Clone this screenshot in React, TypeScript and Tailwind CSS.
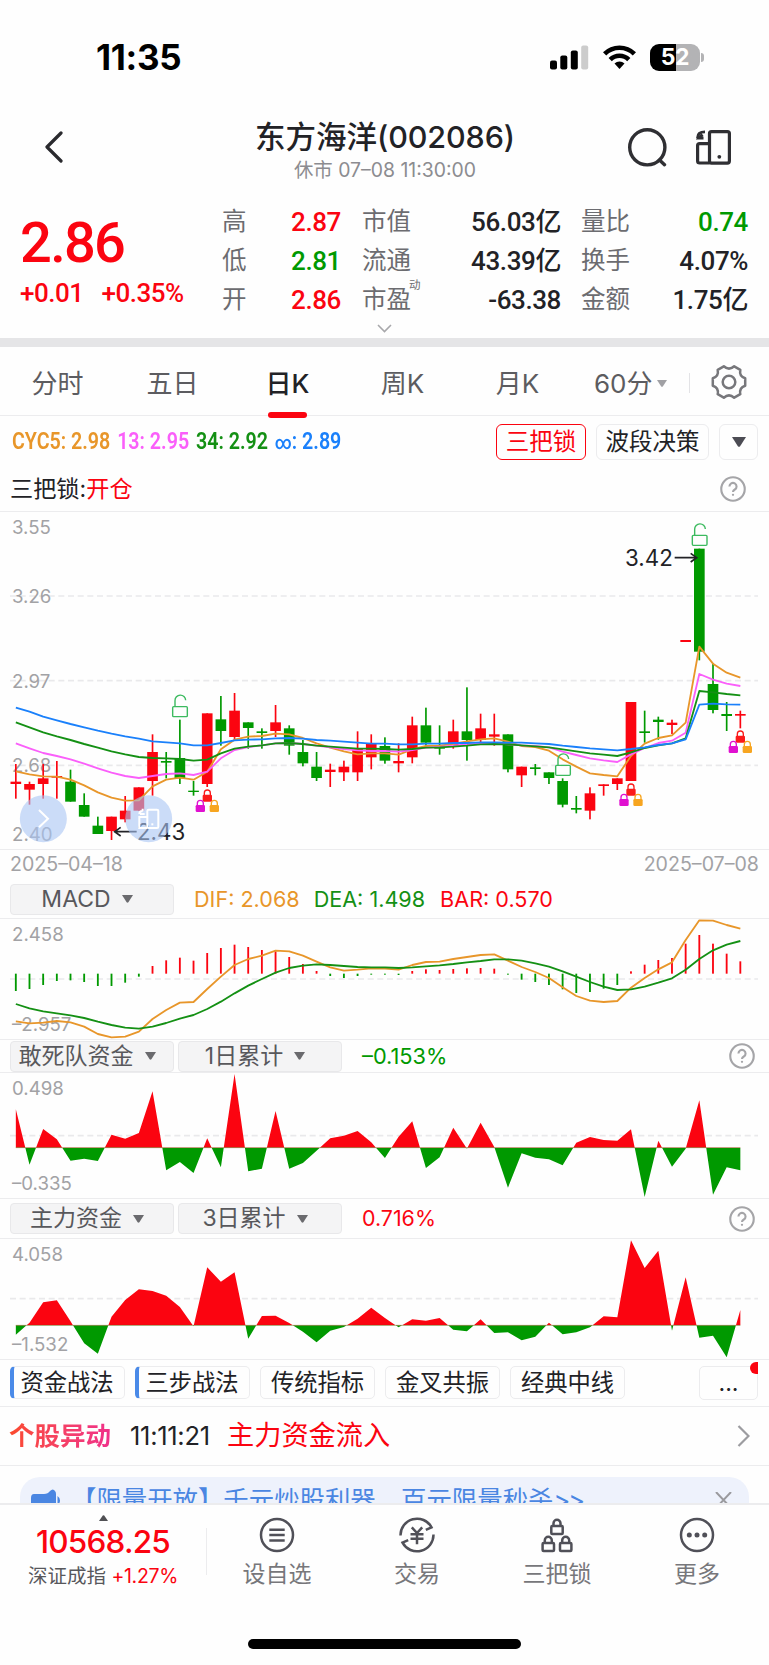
import type { ReactNode } from 'react';
import clsx from 'clsx';

const RED = '#fb0410';
const GREEN = '#009900';
const GOLD = '#e8962a';
const PINK = '#fa5ffa';
const DEEP_GREEN = '#149014';
const BLUE = '#1a80fb';

// Charts are drawn at 3 units per pixel.
const WIDTH = 2307;
const xAt = (i: number) => 47.5 + i * 41.01;

type Candle = ['r' | 'g', number, number, number, number];

// colour, wick top, body top, body bottom, wick bottom
const candles: Candle[] = [
  ['r', 762, 815, 822, 866], ['r', 815, 822, 839, 884], ['r', 762, 805, 822, 866], ['r', 753, 798, 803, 866],
  ['g', 779, 815, 875, 875], ['g', 850, 885, 920, 920], ['g', 920, 947, 972, 972], ['r', 920, 920, 963, 990],
  ['r', 858, 902, 928, 937], ['r', 832, 832, 902, 902], ['r', 673, 726, 813, 857], ['g', 726, 753, 758, 805],
  ['g', 629, 744, 805, 822], ['g', 813, 842, 846, 857], ['r', 610, 610, 822, 831], ['g', 558, 628, 663, 707],
  ['r', 549, 602, 681, 690], ['g', 637, 637, 654, 716], ['g', 655, 664, 669, 716], ['r', 585, 637, 663, 681],
  ['g', 646, 655, 707, 734], ['g', 690, 726, 760, 769], ['g', 726, 770, 804, 813], ['r', 761, 779, 786, 831],
  ['r', 752, 770, 787, 813], ['r', 664, 717, 787, 813], ['r', 673, 700, 742, 778], ['g', 682, 708, 752, 761],
  ['r', 700, 753, 760, 787], ['r', 620, 646, 742, 760], ['g', 593, 646, 698, 708], ['g', 646, 709, 716, 734],
  ['r', 629, 664, 707, 716], ['g', 532, 664, 690, 752], ['r', 611, 655, 690, 698], ['r', 611, 673, 680, 707],
  ['g', 673, 673, 778, 787], ['r', 770, 770, 796, 831], ['g', 762, 772, 777, 796], ['g', 787, 787, 804, 822],
  ['g', 805, 813, 884, 892], ['g', 858, 894, 899, 910], ['r', 832, 850, 902, 928], ['r', 823, 823, 828, 857],
  ['r', 805, 805, 822, 840], ['r', 576, 576, 813, 813], ['g', 602, 664, 669, 698], ['g', 620, 629, 636, 689],
  ['r', 629, 638, 645, 672], ['r', 390, 390, 396, 396], ['g', 116, 116, 425, 451], ['g', 460, 522, 600, 610],
  ['g', 576, 612, 618, 663], ['r', 602, 612, 617, 655],
];

const cyc5 = [784, 793, 799, 800, 809, 826, 847, 863, 872, 871, 829, 809, 803, 809, 785, 718, 689, 680, 678, 671, 673, 684, 700, 713, 724, 733, 730, 730, 734, 718, 708, 707, 702, 694, 688, 685, 695, 708, 711, 722, 748, 770, 790, 795, 799, 738, 701, 684, 676, 638, 410, 461, 488, 503];
const cyc13 = [700, 715, 729, 738, 748, 761, 775, 788, 798, 804, 798, 792, 790, 795, 785, 745, 720, 711, 706, 700, 699, 702, 707, 712, 717, 721, 723, 723, 725, 720, 713, 711, 707, 703, 701, 700, 703, 706, 708, 712, 725, 735, 745, 751, 756, 733, 714, 699, 692, 668, 492, 509, 521, 528];
const cyc34 = [637, 652, 667, 679, 690, 702, 713, 724, 733, 741, 744, 745, 747, 752, 749, 730, 716, 710, 706, 700, 699, 702, 707, 710, 713, 716, 716, 717, 719, 717, 713, 712, 710, 707, 703, 702, 703, 706, 709, 712, 718, 724, 730, 734, 738, 727, 714, 706, 700, 685, 543, 547, 552, 556];
const cycAll = [593, 605, 620, 631, 642, 652, 662, 671, 679, 686, 694, 697, 700, 706, 706, 699, 691, 689, 688, 685, 684, 686, 690, 692, 695, 698, 701, 701, 703, 703, 701, 701, 699, 699, 697, 697, 698, 698, 700, 702, 707, 711, 715, 718, 721, 717, 712, 705, 700, 688, 584, 581, 583, 584];

const macdBars = [363, 357, 345, 333, 331, 336, 348, 348, 338, 320, 288, 271, 263, 272, 249, 234, 224, 231, 240, 244, 261, 282, 303, 318, 324, 318, 314, 314, 315, 303, 298, 300, 297, 295, 294, 296, 314, 329, 336, 345, 358, 369, 366, 356, 345, 304, 284, 270, 264, 221, 195, 221, 251, 274];
const dif = [454, 460, 458, 453, 457, 470, 492, 502, 500, 485, 447, 420, 398, 396, 357, 320, 285, 267, 257, 242, 244, 257, 275, 292, 302, 299, 295, 296, 299, 285, 276, 275, 267, 261, 255, 253, 272, 291, 306, 324, 352, 378, 392, 396, 393, 353, 324, 298, 277, 210, 151, 152, 165, 176];
const dea = [402, 415, 424, 430, 436, 444, 455, 465, 473, 476, 470, 459, 446, 435, 417, 395, 370, 347, 327, 308, 294, 287, 283, 285, 288, 291, 292, 292, 294, 292, 289, 286, 282, 277, 273, 268, 268, 272, 280, 290, 304, 320, 336, 350, 360, 358, 350, 338, 325, 299, 267, 241, 224, 213];

const hotFunds = [148, 314, 207, 238, 302, 296, 303, 224, 236, 219, 94, 331, 306, 339, 235, 322, 42, 334, 326, 153, 326, 309, 272, 235, 227, 213, 247, 294, 230, 184, 324, 292, 203, 266, 188, 261, 383, 280, 293, 298, 316, 248, 231, 240, 242, 208, 411, 242, 320, 266, 121, 404, 322, 331];
const mainFunds = [824, 788, 727, 721, 784, 850, 881, 770, 720, 688, 693, 707, 741, 799, 622, 665, 637, 836, 768, 767, 789, 815, 847, 812, 801, 776, 743, 774, 802, 778, 782, 774, 809, 814, 778, 819, 817, 841, 830, 788, 823, 817, 802, 769, 772, 541, 624, 572, 812, 652, 833, 827, 892, 750];

const points = (ys: number[]) => ys.map((y, i) => `${xAt(i)},${y}`).join(' ');

function Line({ ys, color }: { ys: number[]; color: string }) {
  return <polyline points={points(ys)} fill="none" stroke={color} strokeWidth="5.5" strokeLinejoin="round" />;
}

function Dashed({ y }: { y: number }) {
  return <line x1="30" x2="2274" y1={y} y2={y} stroke="#e9e9eb" strokeWidth="5" strokeDasharray="18 11" />;
}

function AxisLabel({ y, children }: { y: number; children: ReactNode }) {
  return <text x="36" y={y} fontSize="56" fill="#a2a2a5">{children}</text>;
}

function OpenLock({ x, y }: { x: number; y: number }) {
  return (
    <g fill="none" stroke="#3cba5f" strokeWidth="4.2" transform={`translate(${x} ${y})`}>
      <rect x="-22" y="34" width="44" height="30" rx="3" />
      <path d="M-15 34V16a16 16 0 0 1 32-1" />
    </g>
  );
}

function SolidLock({ x, y, color }: { x: number; y: number; color: string }) {
  return (
    <g transform={`translate(${x} ${y})`}>
      <path d="M-9 18V10a9 9 0 0 1 18 0V18" fill="none" stroke={color} strokeWidth="4" />
      <rect x="-14" y="15" width="28" height="21" rx="4" fill={color} />
    </g>
  );
}

function LockTrio({ x, y }: { x: number; y: number }) {
  return (
    <g>
      <SolidLock x={x} y={y} color="#fb1a1a" />
      <SolidLock x={x - 21} y={y + 31} color="#e010d0" />
      <SolidLock x={x + 21} y={y + 31} color="#f7a520" />
    </g>
  );
}

function KLineChart() {
  return (
    <svg className="block h-[337px] w-full" viewBox={`0 6 ${WIDTH} 1011`}>
      <Dashed y={258} />
      <Dashed y={512} />
      <Dashed y={766} />
      <AxisLabel y={72}>3.55</AxisLabel>
      <AxisLabel y={279}>3.26</AxisLabel>
      <AxisLabel y={533}>2.97</AxisLabel>
      <AxisLabel y={787}>2.68</AxisLabel>
      <AxisLabel y={994}>2.40</AxisLabel>
      {candles.map(([kind, high, top, bottom, low], i) => (
        <g key={i} fill={kind === 'r' ? RED : GREEN}>
          <rect x={xAt(i) - 2.5} y={high} width="5" height={low - high} />
          <rect x={xAt(i) - 16} y={top} width="32" height={bottom - top} />
        </g>
      ))}
      <Line ys={cyc5} color={GOLD} />
      <Line ys={cyc13} color={PINK} />
      <Line ys={cyc34} color={DEEP_GREEN} />
      <Line ys={cycAll} color={BLUE} />
      <OpenLock x={540} y={556} />
      <OpenLock x={1689} y={732} />
      <OpenLock x={2099} y={42} />
      <LockTrio x={622} y={839} />
      <LockTrio x={1893} y={821} />
      <LockTrio x={2221} y={662} />
      <g fill="none" stroke="#222226" strokeWidth="5">
        <path d="M410 965H344m18-13-18 13 18 13" />
        <path d="M2024 143h66m-18-13 18 13-18 13" />
      </g>
      <g fill="#222226" fontSize="67">
        <text x="411" y="990">2.43</text>
        <text x="1875" y="167">3.42</text>
      </g>
      <g fill="#a9c4f3" fillOpacity="0.6">
        <circle cx="130" cy="926" r="70.5" />
        <circle cx="446" cy="926" r="70.5" />
      </g>
      <g fill="none" stroke="#fff" strokeWidth="6">
        <path d="M117 900l27 26-27 26" />
        <rect x="442" y="899" width="33" height="55" rx="4" />
        <path d="M442 921h-24v33h24M418 912q0-9 10-9m-8 9h14m-6-16v7" />
      </g>
      <rect x="454" y="940" width="6" height="6" fill="#fff" />
    </svg>
  );
}

function MacdChart() {
  return (
    <svg className="block h-[120px] w-full" viewBox={`0 147 ${WIDTH} 360`}>
      <Dashed y={327} />
      <AxisLabel y={213}>2.458</AxisLabel>
      <AxisLabel y={484}>–2.957</AxisLabel>
      {macdBars.map((y, i) => (
        <rect key={i} x={xAt(i) - 2.8} y={Math.min(y, 311)} width="5.5" height={Math.abs(y - 311)} fill={y < 311 ? RED : GREEN} />
      ))}
      <Line ys={dif} color={GOLD} />
      <Line ys={dea} color={DEEP_GREEN} />
    </svg>
  );
}

type FundsChartProps = { id: string; ys: number[]; top: number; height: number; base: number; mid: number; className: string; children: ReactNode };

function FundsChart({ id, ys, top, height, base, mid, className, children }: FundsChartProps) {
  const area = `${xAt(0)},${base} ${points(ys)} ${xAt(53)},${base}`;
  return (
    <svg className={clsx('block w-full', className)} viewBox={`0 ${top} ${WIDTH} ${height}`}>
      <clipPath id={`${id}-up`}>
        <rect x="0" y={top} width={WIDTH} height={base - top} />
      </clipPath>
      <clipPath id={`${id}-down`}>
        <rect x="0" y={base} width={WIDTH} height={height} />
      </clipPath>
      <Dashed y={mid} />
      {children}
      <polygon points={area} fill={RED} clipPath={`url(#${id}-up)`} />
      <polygon points={area} fill={GREEN} clipPath={`url(#${id}-down)`} />
      <line x1={xAt(0)} x2={xAt(53)} y1={base} y2={base} stroke="#7a4a00" strokeWidth="2" strokeOpacity="0.6" />
    </svg>
  );
}

function Caret({ className }: { className: string }) {
  return (
    <svg className={className} viewBox="0 0 10 8" preserveAspectRatio="none">
      <path d="M0 0h10L5.8 7.3q-.8.9-1.6 0z" fill="currentColor" />
    </svg>
  );
}

function Help() {
  return (
    <svg className="size-[26px] text-[#a5a5a8]" viewBox="0 0 27 27" fill="none" stroke="currentColor" strokeWidth="2.2">
      <circle cx="13.5" cy="13.5" r="12.2" />
      <path d="M9.8 10.8a3.7 3.7 0 1 1 5.6 3.2q-1.9 1.1-1.9 2.7" />
      <circle cx="13.5" cy="19.6" r="1.2" fill="currentColor" stroke="none" />
    </svg>
  );
}

function Picker({ children }: { children: ReactNode }) {
  return (
    <button className="flex h-[31px] w-[164px] items-center justify-center gap-[11px] rounded-[4px] border border-[#e8e8ea] bg-[#f4f4f5] pr-[10px] text-[23px] leading-none whitespace-nowrap text-[#58585c]">
      {children}
      <Caret className="h-2 w-[11px] text-[#6a6a6e]" />
    </button>
  );
}

function StatusBar() {
  return (
    <div className="flex h-[100px] items-start justify-between pt-[37px] pr-[65px] pl-[96px]">
      <div className="text-[35px] leading-[40px] font-bold tracking-[-0.3px] text-black">11:35</div>
      <div className="flex h-10 items-center gap-[14px]">
        <svg className="h-[25px] w-[39px]" viewBox="0 0 39 25">
          <rect x="0" y="15.5" width="7" height="9" rx="2" />
          <rect x="10.3" y="10.5" width="7" height="14" rx="2" />
          <rect x="20.8" y="5.5" width="7" height="19" rx="2" />
          <rect x="31.2" y="0.5" width="7" height="24" rx="2" fill="#ccc" />
        </svg>
        <svg className="h-6 w-[33px]" viewBox="0 0 33 24" fill="none" stroke="#000" strokeWidth="4.6">
          <path d="M1.6 8.9a21 21 0 0 1 29.8 0" />
          <path d="M7.2 14.6a13.2 13.2 0 0 1 18.6 0" />
          <path d="M16.5 24l-5-5.6a7.2 7.2 0 0 1 10 0z" fill="#000" stroke="none" />
        </svg>
        <div className="flex items-center gap-[1px]">
          <div className="flex h-[27px] w-[50px] items-center justify-center rounded-[9px] bg-linear-to-r from-black from-52% to-[#b3b3b5] to-52% text-[23px] leading-none font-bold tracking-[-0.3px] text-white">
            52
          </div>
          <div className="h-[9px] w-[3px] rounded-r-full bg-[#b3b3b5]" />
        </div>
      </div>
    </div>
  );
}

function Header() {
  return (
    <header className="flex h-[100px] items-start pr-[36px] pl-[44px]">
      <svg className="mt-[31px] h-[32px] w-[20px]" viewBox="0 0 20 32" fill="none" stroke="#2a2a2e" strokeWidth="3.2">
        <path d="M17 2 3 16l14 14" strokeLinecap="round" strokeLinejoin="round" />
      </svg>
      <div className="ml-[141px] flex w-[360px] flex-col items-center">
        <h1 className="mt-[17px] text-[30.5px] leading-[40px] font-medium whitespace-nowrap text-[#222226]">
          东方海洋<span className="tracking-[-0.1px]">(002086)</span>
        </h1>
        <p className="mt-px text-[19.4px] leading-[24px] whitespace-nowrap text-[#8c8c90]">休市 07–08 11:30:00</p>
      </div>
      <svg className="mt-[27px] ml-[62px] h-[40px] w-[42px]" viewBox="0 0 42 40" fill="none" stroke="#2f2f33" strokeWidth="3.4">
        <circle cx="20.3" cy="20.300" r="17.6" />
        <path d="M32.500 33l5 4.700" strokeLinecap="round" />
      </svg>
      <svg className="mt-[30px] ml-[27px] h-[35px] w-[35px] shrink-0" viewBox="0 0 35 35" fill="none" stroke="#2f2f33" strokeWidth="3.2">
        <rect x="13.500" y="1.600" width="19.900" height="31.500" rx="2" />
        <path d="M13.500 13.600H3.600q-2 0-2 2V31q0 2 2 2h10" />
        <path d="M1.600 8q-.3-6.200 7.400-6.200M6.500 4.500 3 8h4.500" strokeWidth="2.800" />
        <circle cx="23.300" cy="26.800" r="1.900" fill="#2f2f33" stroke="none" />
      </svg>
    </header>
  );
}

type Stat = [ReactNode, string, string];

function StatColumn({ stats, className }: { stats: Stat[]; className: string }) {
  return (
    <div className={className}>
      {stats.map(([label, value, color], i) => (
        <div key={i} className="flex h-[39px] items-center justify-between whitespace-nowrap">
          <span className="text-[24.5px] text-[#6c6c70]">{label}</span>
          <span className={clsx("pt-px font-['Roboto','Noto_Sans_CJK_SC',sans-serif] text-[26px] font-medium tracking-[-0.4px]", color)}>{value}</span>
        </div>
      ))}
    </div>
  );
}

function Quote() {
  return (
    <section className="h-[138px]">
      <div className="flex h-[122px]">
        <div className="w-[222px] pl-[20px] font-['Roboto',sans-serif] font-medium text-[#fb0410]">
          <div className="pt-[11px] text-[56px] leading-[64px] tracking-[-1.700px]">2.86</div>
          <div className="flex gap-[18px] pt-[1px] text-[26px] leading-[34px] tracking-[-0.5px]">
            <span>+0.01</span>
            <span>+0.35%</span>
          </div>
        </div>
        <StatColumn
          className="mt-[2px] w-[119px]"
          stats={[
            ['高', '2.87', 'text-[#fb0410]'],
            ['低', '2.81', 'text-[#009900]'],
            ['开', '2.86', 'text-[#fb0410]'],
          ]}
        />
        <StatColumn
          className="mt-[2px] ml-[21px] w-[199px]"
          stats={[
            ['市值', '56.03亿', 'text-[#222226]'],
            ['流通', '43.39亿', 'text-[#222226]'],
            [<>市盈<sup className="-top-[1.700em] -ml-[2px] text-[11.500px]">动</sup></>, '-63.38', 'text-[#222226]'],
          ]}
        />
        <StatColumn
          className="mt-[2px] ml-[20px] w-[167px]"
          stats={[
            ['量比', '0.74', 'text-[#009900]'],
            ['换手', '4.07%', 'text-[#222226]'],
            ['金额', '1.75亿', 'text-[#222226]'],
          ]}
        />
      </div>
      <svg className="mx-auto mt-[2px] h-[9px] w-[15px]" viewBox="0 0 15 9" fill="none" stroke="#a8a8ab" strokeWidth="1.6">
        <path d="M1 1l6.500 6.500L14 1" />
      </svg>
    </section>
  );
}

const tabs = ['分时', '五日', '日K', '周K', '月K'];

function Tabs() {
  return (
    <nav className="flex h-[69px] border-b border-[#ececee] text-[26px] text-[#5c5c60]">
      {tabs.map((tab) => (
        <div key={tab} className="flex w-[115px] flex-col items-center">
          <span className={clsx('flex h-[65px] shrink-0 items-center pt-[7px]', tab === '日K' && 'font-medium text-[#222226]')}>{tab}</span>
          {tab === '日K' && <div className="h-[6px] w-[39px] shrink-0 rounded-full bg-[#fb0410]" />}
        </div>
      ))}
      <div className="flex h-[65px] items-center pt-[7px] pl-[19px] whitespace-nowrap">
        60分
        <Caret className="ml-1 h-[7px] w-[10px] text-[#a0a0a4]" />
        <div className="ml-[22px] h-5 w-px bg-[#e3e3e6]" />
        <svg className="mt-[-2px] ml-[21px] size-[36px]" viewBox="0 0 36 36" fill="none" stroke="#77777b" strokeWidth="2.500" strokeLinejoin="round">
          <path d="M12.800 2.300 Q18 7 23.200 2.300 L29.300 5.800 Q28 12.400 34.200 14.300 V21.700 Q28 23.600 29.300 30.200 L23.200 33.700 Q18 29 12.800 33.700 L6.700 30.200 Q8 23.600 1.800 21.700 V14.300 Q8 12.400 6.700 5.800 Z" />
          <circle cx="18" cy="18" r="6.300" />
        </svg>
      </div>
    </nav>
  );
}

function Indicators() {
  return (
    <section className="h-[96px] border-b border-[#ececee]">
      <div className="flex h-[52px] items-center pr-[11px] pl-[12px]">
        <div className="flex flex-1 origin-left scale-x-[0.855] gap-[8px] font-['Roboto',sans-serif] text-[23px] font-semibold whitespace-nowrap">
          <span className="text-[#e8962a]">CYC5: 2.98</span>
          <span className="text-[#fa5ffa]">13: 2.95</span>
          <span className="text-[#149014]">34: 2.92</span>
          <span className="text-[#1a80fb]"><span className="text-[19px]">∞</span>: 2.89</span>
        </div>
        <button className="h-9 w-[90px] shrink-0 rounded-[6px] border border-[#fb0410] text-[23.500px] leading-none text-[#fb0410]">三把锁</button>
        <button className="ml-[10px] h-9 w-[113px] shrink-0 rounded-[6px] border border-[#ececee] text-[23.500px] leading-none whitespace-nowrap text-[#222226]">波段决策</button>
        <button className="ml-[10px] flex h-9 w-[39px] shrink-0 items-center justify-center rounded-[6px] border border-[#ececee]">
          <Caret className="h-[10px] w-[14px] text-[#4c4c54]" />
        </button>
      </div>
      <div className="flex h-[42px] items-center justify-between pr-[23px] pl-[10px] text-[23.200px]">
        <div className="text-[#222226]">
          三把锁:<span className="text-[#fb0410]">开仓</span>
        </div>
        <Help />
      </div>
    </section>
  );
}

function Chips() {
  return (
    <div className="flex h-[47px] items-start gap-[10px] border-b border-[#ececee] pr-[11px] pl-[10px] pt-[6px] text-[23.300px] leading-none text-[#222226]">
      {['资金战法', '三步战法', '传统指标', '金叉共振', '经典中线'].map((name, i) => (
        <button
          key={name}
          className={clsx(
            'h-[33px] w-[115px] overflow-hidden rounded-[5px] border whitespace-nowrap border-[#ececee]',
            i < 2 && 'border-l-4 border-l-[#4a8ae8] pr-[4px]',
          )}
        >
          {name}
        </button>
      ))}
      <button className="relative ml-auto h-[34px] w-[59px] rounded-[5px] border border-[#ececee]">
        ...
        <span className="absolute -top-[5px] -right-px h-3 w-2 rounded-l-full bg-[#fb0410]" />
      </button>
    </div>
  );
}

function NavItem({ label, children }: { label: string; children: ReactNode }) {
  return (
    <div className="flex w-[140px] flex-col items-center pt-[12px]">
      <svg className="size-9" viewBox="0 0 36 36" fill="none" stroke="#505058" strokeWidth="2.500">
        {children}
      </svg>
      <span className="mt-[3px] text-[23px] leading-[36px] text-[#77777b]">{label}</span>
    </div>
  );
}

function BottomNav() {
  return (
    <nav className="h-[162px] border-t-2 border-[#ececee]">
      <div className="flex h-[100px]">
        <div className="flex w-[206px] flex-col items-center whitespace-nowrap">
          <Caret className="mt-[10px] h-[6px] w-[9px] rotate-180 text-[#505054]" />
          <div className="mt-[4px] text-[31.500px] leading-[34px] font-medium tracking-[-0.800px] text-[#fb0410]">10568.25</div>
          <div className="mt-[3px] text-[19.500px] leading-[28px] text-[#58585c]">
            深证成指 <span className="tracking-[-0.300px] text-[#fb0410]">+1.27%</span>
          </div>
        </div>
        <div className="mt-[23px] h-[47px] w-px bg-[#ececee]" />
        <NavItem label="设自选">
          <circle cx="18" cy="18" r="16" />
          <path d="M10.300 12.800h15.400M10.300 18h15.400M10.300 23.400h15.400" />
        </NavItem>
        <NavItem label="交易">
          <path d="M1.500 18.500A16.500 16.500 0 0 1 32.500 10.300L26.800 12.800M34.500 17.500A16.500 16.500 0 0 1 3.500 25.700L9.200 23.200" />
          <path d="M12.800 10.300l5.200 5.700 5.200-5.700M18 15.500v11.800M11.500 17.300h13M11.500 21.800h13" />
        </NavItem>
        <NavItem label="三把锁">
          <rect x="12.300" y="9" width="11.400" height="8" rx="1" />
          <path d="M14.500 9V6.300a3.500 3.500 0 0 1 7 0V9" />
          <rect x="3.600" y="26" width="11.400" height="8" rx="1" />
          <path d="M5.800 26v-2.700a3.500 3.500 0 0 1 7 0V26" />
          <rect x="21" y="26" width="11.400" height="8" rx="1" />
          <path d="M23.200 26v-2.700a3.500 3.500 0 0 1 7 0V26" />
        </NavItem>
        <NavItem label="更多">
          <circle cx="18" cy="18" r="16" />
          <g fill="#505058" stroke="none">
            <circle cx="10.300" cy="18" r="2.500" />
            <circle cx="18" cy="18" r="2.500" />
            <circle cx="25.700" cy="18" r="2.500" />
          </g>
        </NavItem>
      </div>
      <div className="mx-auto mt-[34px] h-[10px] w-[273px] rounded-full bg-black" />
    </nav>
  );
}

export default function App() {
  return (
    <div className="h-[1665px] w-[769px] overflow-hidden bg-[#fefefe] font-['Inter','Noto_Sans_CJK_SC',sans-serif]">
      <StatusBar />
      <Header />
      <Quote />
      <div className="h-[9px] bg-[#e5e5e7]" />
      <Tabs />
      <Indicators />
      <KLineChart />
      <div className="flex h-[31px] items-center justify-between border-t border-[#ececee] px-[10px] text-[19.600px] text-[#a2a2a5]">
        <span>2025–04–18</span>
        <span>2025–07–08</span>
      </div>
      <div className="flex h-[39px] items-center border-b border-[#ececee] px-[10px] text-[21.600px] whitespace-nowrap">
        <Picker>MACD</Picker>
        <span className="ml-[20px] text-[#e8962a]">DIF: 2.068</span>
        <span className="ml-[14px] text-[#149014]">DEA: 1.498</span>
        <span className="ml-[15px] text-[#fb0410]">BAR: 0.570</span>
      </div>
      <MacdChart />
      <div className="flex h-[34px] items-center gap-[4px] border-y border-[#ececee] pr-[14px] pl-[10px] text-[21.800px]">
        <Picker>敢死队资金</Picker>
        <Picker>1日累计</Picker>
        <span className="ml-[16px] flex-1 text-[#009900]">–0.153%</span>
        <Help />
      </div>
      <FundsChart id="hot" ys={hotFunds} top={39} height={375} base={263} mid={227} className="h-[125px]">
        <AxisLabel y={104}>0.498</AxisLabel>
        <AxisLabel y={391}>–0.335</AxisLabel>
      </FundsChart>
      <div className="flex h-[41px] items-center gap-[4px] border-y border-[#ececee] pr-[14px] pl-[10px] text-[21.400px]">
        <Picker>主力资金</Picker>
        <Picker>3日累计</Picker>
        <span className="ml-[16px] flex-1 text-[#fb0410]">0.716%</span>
        <Help />
      </div>
      <FundsChart id="main" ys={mainFunds} top={537} height={360} base={796} mid={716} className="h-[120px]">
        <AxisLabel y={603}>4.058</AxisLabel>
        <AxisLabel y={873}>–1.532</AxisLabel>
      </FundsChart>
      <div className="h-px bg-[#ececee]" />
      <Chips />
      <div className="flex h-[59px] items-center border-b border-[#ececee] pr-[19px] pl-[9px] whitespace-nowrap">
        <span className="bg-linear-to-r from-[#fb4a2a] to-[#f0308a] bg-clip-text text-[25.500px] font-bold text-transparent">个股异动</span>
        <span className="ml-[19px] w-[86px] text-[25.500px] tracking-[-0.300px] text-[#222226]">11:11:21</span>
        <span className="ml-[11px] flex-1 pt-px text-[27.200px] text-[#fb0410]">主力资金流入</span>
        <svg className="h-[22px] w-[13px]" viewBox="0 0 13 22" fill="none" stroke="#9c9ca0" strokeWidth="2.200">
          <path d="M1.500 1l10 10-10 10" />
        </svg>
      </div>
      <div className="h-[37px] overflow-hidden px-[20px] pt-[11px]">
        <div className="flex h-[46px] items-center rounded-[20px] bg-[#eef2fc] pr-[17px] pl-[11px] text-[25.400px] whitespace-nowrap text-[#4a86e2]">
          <svg className="h-[24px] w-[29px]" viewBox="0 0 29 24" fill="#4a86e2">
            <path d="M3 6h10q4 0 6-3 3-3 5 0 1 1 1 3v12q0 5-3 4l-7-3H4q-4 0-4-4v-5q0-4 3-4zM26.500 8q2.500 1.500 2.500 4.500t-2.500 4.500z" />
          </svg>
          <span className="ml-[11px] flex-1">【限量开放】千元炒股利器　百元限量秒杀<span className="tracking-[-2px]">&gt;&gt;</span></span>
          <svg className="h-4 w-[17px]" viewBox="0 0 17 16" fill="none" stroke="#9a9a9e" strokeWidth="2">
            <path d="M1 0l15 16M16 0L1 16" />
          </svg>
        </div>
      </div>
      <BottomNav />
    </div>
  );
}
